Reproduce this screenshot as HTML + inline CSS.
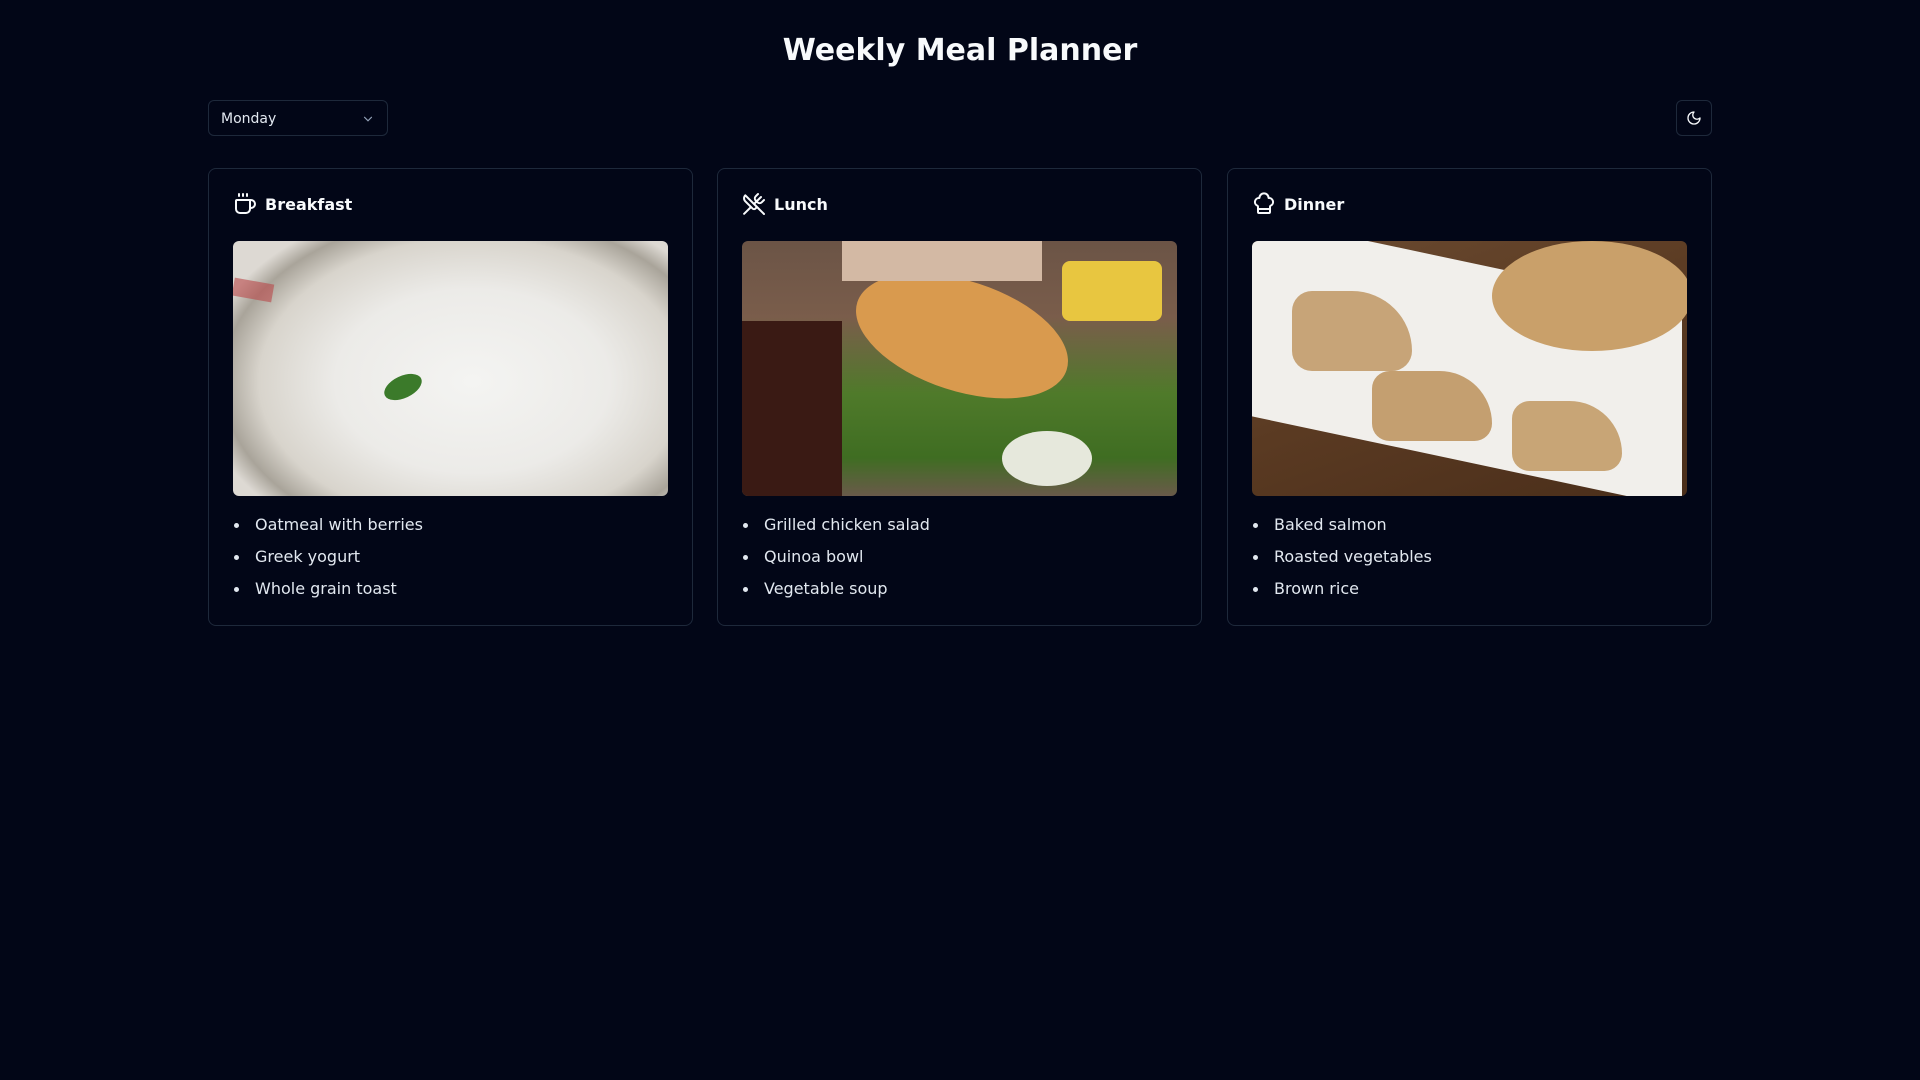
<!DOCTYPE html>
<html><head><meta charset="utf-8"><style>
*{box-sizing:border-box;margin:0;padding:0}
body{width:1920px;height:1080px;background:#020617;color:#f8fafc;font-family:"DejaVu Sans","Liberation Sans",sans-serif;position:relative;overflow:hidden}
h1{position:absolute;top:31px;width:100%;text-align:center;font-size:30px;font-weight:bold;line-height:40px}
.sel{position:absolute;left:208px;top:100px;width:180px;height:36px;border:1px solid #1e293b;border-radius:6px;font-size:14px;padding:0 12px;line-height:36px;color:#e2e8f0}
.sel svg{position:absolute;right:12px;top:11px}
.btn{position:absolute;left:1676px;top:100px;width:36px;height:36px;border:1px solid #1e293b;border-radius:6px}
.btn svg{position:absolute;left:9px;top:9px}
.card{position:absolute;top:168px;width:485px;height:458px;border:1px solid #1e293b;border-radius:8px}
.hd{position:absolute;left:24px;top:23px;height:24px;display:flex;align-items:center;font-weight:bold;font-size:16px}
.hd svg{margin-right:8px}
.img{position:absolute;left:24px;top:72px;width:435px;height:255px;border-radius:6px;overflow:hidden}
ul{position:absolute;left:24px;top:340px;list-style:none;font-size:16px;color:#e2e8f0}
li{height:32px;line-height:32px;padding-left:22px;position:relative}
li:before{content:"";position:absolute;left:1px;top:14px;width:5px;height:5px;border-radius:50%;background:#e2e8f0}
</style></head><body>
<h1>Weekly Meal Planner</h1>
<div class="sel">Monday<svg width="14" height="14" viewBox="0 0 24 24" fill="none" stroke="#94a3b8" stroke-width="2" stroke-linecap="round"><path d="m6 9 6 6 6-6"/></svg></div>
<div class="btn"><svg width="16" height="16" viewBox="0 0 24 24" fill="none" stroke="#f8fafc" stroke-width="2" stroke-linecap="round" stroke-linejoin="round"><path d="M12 3a6 6 0 0 0 9 9 9 9 0 1 1-9-9Z"/></svg></div>

<div class="card" style="left:208px">
<div class="hd"><svg width="24" height="24" viewBox="0 0 24 24" fill="none" stroke="#f8fafc" stroke-width="2" stroke-linecap="round" stroke-linejoin="round"><path d="M10 2v2M14 2v2M16 8a1 1 0 0 1 1 1v8a4 4 0 0 1-4 4H7a4 4 0 0 1-4-4V9a1 1 0 0 1 1-1h14a4 4 0 1 1 0 8h-1M6 2v2"/></svg>Breakfast</div>
<div class="img" style="background:radial-gradient(ellipse 70% 80% at 55% 55%,#f4f4f2 0%,#ecebe8 45%,#d8d4cc 70%,#a9a49a 82%,#ddd9d3 90%);"><div style="position:absolute;left:0;top:40px;width:40px;height:18px;background:#b9474a;opacity:.6;transform:rotate(10deg)"></div><div style="position:absolute;left:150px;top:135px;width:40px;height:22px;border-radius:50%;background:#3b7a2a;transform:rotate(-25deg)"></div></div>
<ul><li>Oatmeal with berries</li><li>Greek yogurt</li><li>Whole grain toast</li></ul>
</div>

<div class="card" style="left:717px">
<div class="hd"><svg width="24" height="24" viewBox="0 0 24 24" fill="none" stroke="#f8fafc" stroke-width="2" stroke-linecap="round" stroke-linejoin="round"><path d="m16 2-2.3 2.3a3 3 0 0 0 0 4.2l1.8 1.8a3 3 0 0 0 4.2 0L22 8M15 15 3.3 3.3a4.2 4.2 0 0 0 0 6l7.3 7.3c.7.7 2 .7 2.8 0L15 15Zm0 0 7 7M2.1 21.8l6.4-6.3M19 5l-7 7"/></svg>Lunch</div>
<div class="img" style="background:linear-gradient(180deg,#6b5446 0%,#7a5d4b 30%,#4f7a2a 60%,#3f6d22 85%,#6a5a4a 100%);">
<div style="position:absolute;left:110px;top:40px;width:220px;height:110px;border-radius:50%;background:#d99a4e;transform:rotate(18deg)"></div>
<div style="position:absolute;left:320px;top:20px;width:100px;height:60px;border-radius:8px;background:#e8c640"></div>
<div style="position:absolute;left:0;top:80px;width:100px;height:175px;background:#3a1a14"></div>
<div style="position:absolute;left:260px;top:190px;width:90px;height:55px;border-radius:50%;background:#e6e8dc"></div>
<div style="position:absolute;left:100px;top:0;width:200px;height:40px;background:#d3b9a4"></div></div>
<ul><li>Grilled chicken salad</li><li>Quinoa bowl</li><li>Vegetable soup</li></ul>
</div>

<div class="card" style="left:1227px">
<div class="hd"><svg width="24" height="24" viewBox="0 0 24 24" fill="none" stroke="#f8fafc" stroke-width="2" stroke-linecap="round" stroke-linejoin="round"><path d="M17 21a1 1 0 0 0 1-1v-5.35c0-.46.32-.85.74-1.04a4 4 0 0 0-2.13-7.6 4.5 4.5 0 0 0-9.22 0 4 4 0 0 0-2.13 7.6c.42.19.74.58.74 1.04V20a1 1 0 0 0 1 1ZM6 17h12"/></svg>Dinner</div>
<div class="img" style="background:linear-gradient(160deg,#6a4a30 0%,#5a3a22 50%,#4a2e1a 100%);">
<div style="position:absolute;left:-10px;top:20px;width:440px;height:200px;background:#f1efeb;transform:skewY(12deg)"></div>
<div style="position:absolute;left:240px;top:0;width:200px;height:110px;border-radius:50%;background:#c9a06a"></div>
<div style="position:absolute;left:40px;top:50px;width:120px;height:80px;background:#c7a478;border-radius:20px 60px 20px 20px"></div>
<div style="position:absolute;left:120px;top:130px;width:120px;height:70px;background:#c49f70;border-radius:20px 60px 20px 20px"></div>
<div style="position:absolute;left:260px;top:160px;width:110px;height:70px;background:#c8a576;border-radius:20px 60px 20px 20px"></div></div>
<ul><li>Baked salmon</li><li>Roasted vegetables</li><li>Brown rice</li></ul>
</div>
</body></html>
